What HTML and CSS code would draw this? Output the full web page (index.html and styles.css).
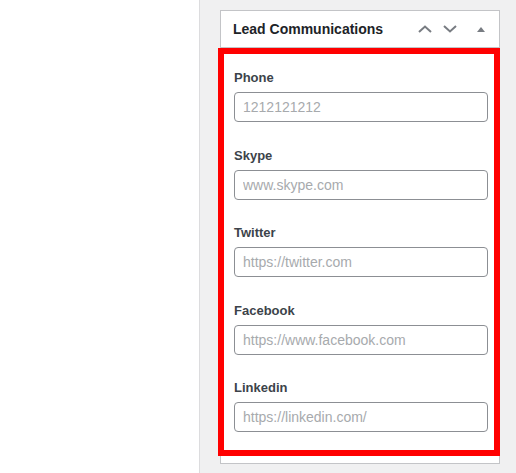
FILE: index.html
```html
<!DOCTYPE html>
<html lang="en">
<head>
    <meta charset="UTF-8">
    <meta name="viewport" content="width=device-width, initial-scale=1.0">
    <title>Lead Communications</title>
    <link rel="stylesheet" href="styles.css">
</head>
<body>
    <div class="editor-side"></div>

    <div class="sidebar">
        <div class="postbox">
            <div class="postbox-header">
                <h2 class="postbox-title">Lead Communications</h2>
                <div class="handle-actions">
                    <span class="handle-btn handle-up">
                        <svg width="14" height="8" viewBox="0 0 14 8"><path d="M1 7 L7 1.5 L13 7" fill="none" stroke="#787c82" stroke-width="2"/></svg>
                    </span>
                    <span class="handle-btn handle-down">
                        <svg width="14" height="8" viewBox="0 0 14 8"><path d="M1 1 L7 6.5 L13 1" fill="none" stroke="#787c82" stroke-width="2"/></svg>
                    </span>
                    <span class="handle-btn handle-toggle">
                        <svg width="8" height="5" viewBox="0 0 8 5"><path d="M0 5 L4 0 L8 5 Z" fill="#787c82"/></svg>
                    </span>
                </div>
            </div>

            <div class="inside highlighted">
                <div class="field">
                    <label class="field-label">Phone</label>
                    <input type="text" class="field-input" placeholder="1212121212">
                </div>
                <div class="field">
                    <label class="field-label">Skype</label>
                    <input type="text" class="field-input" placeholder="www.skype.com">
                </div>
                <div class="field">
                    <label class="field-label">Twitter</label>
                    <input type="text" class="field-input" placeholder="https://twitter.com">
                </div>
                <div class="field">
                    <label class="field-label">Facebook</label>
                    <input type="text" class="field-input" placeholder="https://www.facebook.com">
                </div>
                <div class="field">
                    <label class="field-label">Linkedin</label>
                    <input type="text" class="field-input" placeholder="https://linkedin.com/">
                </div>
            </div>
        </div>
    </div>
</body>
</html>
```

FILE: styles.css
```css
body {
    margin: 0;
    display: flex;
    height: 473px;
    overflow: hidden;
    font-family: "Liberation Sans", Arial, sans-serif;
    background-color: #f0f0f1;
}

.editor-side {
    width: 199px;
    flex: none;
    background-color: #fff;
    border-right: 1px solid #dcdcde;
}

.sidebar {
    flex: 1;
    padding: 10px 0 0 20px;
}

.postbox {
    width: 278px;
    background-color: #fff;
    border: 1px solid #c3c4c7;
}

.postbox-header {
    display: flex;
    align-items: center;
    height: 36px;
    border-bottom: 1px solid #c3c4c7;
}

.postbox-title {
    flex: 1;
    margin: 0;
    padding-left: 12px;
    font-size: 14px;
    font-weight: 700;
    color: #1d2327;
    line-height: 1;
}

.handle-actions {
    display: flex;
    height: 100%;
}

.handle-btn {
    display: flex;
    align-items: center;
    justify-content: center;
    height: 100%;
}

.handle-up {
    width: 24px;
}

.handle-down {
    width: 26px;
}

.handle-toggle {
    width: 36px;
}

/* красная рамка поверх содержимого */
.highlighted {
    border: 6px solid #ff0000;
    margin: 0 -1px 7px -3px;
    padding: 15px 6px 18px 10px;
}

.field {
    display: flex;
    flex-direction: column;
}

.field + .field {
    margin-top: 24.5px;
}

.field-label {
    font-size: 13px;
    font-weight: 700;
    line-height: 18px;
    color: #3c434a;
    margin-bottom: 5px;
}

.field-input {
    box-sizing: border-box;
    width: 254px;
    height: 30px;
    margin: 0;
    padding: 0 8px;
    border: 1px solid #8c8f94;
    border-radius: 4px;
    font-family: "Liberation Sans", Arial, sans-serif;
    font-size: 14px;
    color: #2c3338;
    background-color: #fff;
}

.field-input::placeholder {
    color: #a7aaad;
}

.field-input:focus {
    outline: none;
}
```
